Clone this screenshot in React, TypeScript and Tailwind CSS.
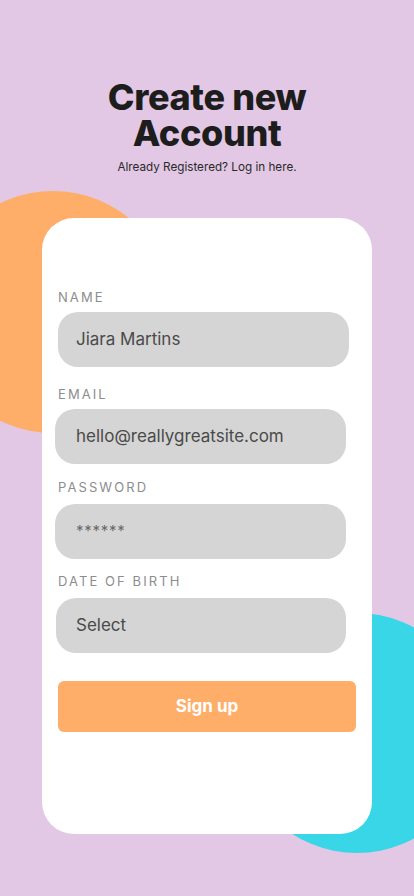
import React from "react";

const body = { fontFamily: "Inter, 'Noto Sans', sans-serif" };

function Field({ label, value, cls, mt, gap, dim }: { label: string; value: string; cls: string; mt: string; gap: string; dim?: boolean }) {
  return (
    <div className={mt}>
      <div className="ml-[16px] h-[16px] text-[13px] leading-[16px] tracking-[0.16em] text-[#8d8d8d]">{label}</div>
      <div className={`${gap} h-[55px] rounded-[20px] bg-[#d5d5d5] flex items-center ${cls}`}>
        <span className={dim ? "text-[15px] tracking-[0.05em] text-[#6a6a6a]" : "text-[17px] text-[#4a4a4a]"}>{value}</span>
      </div>
    </div>
  );
}

export default function App() {
  return (
    <div className="relative w-[414px] h-[896px] overflow-hidden bg-[#e2c8e4]" style={body}>
      <div className="absolute left-[-68px] top-[191px] w-[242px] h-[242px] rounded-full bg-[#ffae6a]" />
      <div className="absolute left-[237px] top-[613px] w-[240px] h-[240px] rounded-full bg-[#38d6e6]" />
      <div className="relative flex flex-col items-center pt-[79px]">
        <h1 className="text-[36px] leading-[36px] font-extrabold text-[#1d1d1d] text-center tracking-[-0.01em]">
          <span className="block">Create new</span>
          <span className="block">Account</span>
        </h1>
        <p className="mt-[8px] text-[11.7px] leading-[16px] text-[#2a2a2a]">Already Registered? Log in here.</p>
      </div>
      <div className="relative ml-[42px] mt-[43px] w-[330px] h-[616px] rounded-[32px] bg-white pt-[71px]">
        <Field label="NAME" value="Jiara Martins" cls="ml-[16px] w-[291px] pl-[18px]" mt="" gap="mt-[7px]" />
        <Field label="EMAIL" value="hello@reallygreatsite.com" cls="ml-[13px] w-[291px] pl-[21px]" mt="mt-[19px]" gap="mt-[7px]" />
        <Field label="PASSWORD" value="******" cls="ml-[13px] w-[291px] pl-[21px]" dim mt="mt-[15px]" gap="mt-[9px]" />
        <Field label="DATE OF BIRTH" value="Select" cls="ml-[14px] w-[290px] pl-[20px]" mt="mt-[14px]" gap="mt-[9px]" />
        <button className="mt-[28px] ml-[16px] w-[298px] h-[51px] rounded-[6px] bg-[#ffae6a] text-white text-[17px] font-bold">
          Sign up
        </button>
      </div>
    </div>
  );
}
